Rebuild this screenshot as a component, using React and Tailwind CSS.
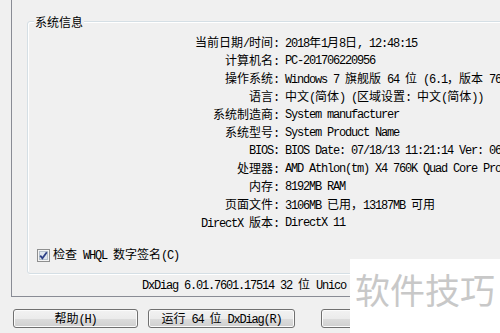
import React from 'react';

const CJK = /([\u2E80-\u9FFF\u3000-\u303F\uFF00-\uFFEF]+)/;

// SimSun-like mix: CJK 12px full width, latin 6px half width
function T({ s }) {
  return s.split(CJK).map((p, i) => {
    if (!p) return null;
    if (CJK.test(p)) {
      return (
        <span key={i} className="font-['Noto_Sans_CJK_SC',sans-serif]">
          {p}
        </span>
      );
    }
    return (
      <span key={i} className="font-['Liberation_Mono',monospace] tracking-[-1.2px] whitespace-pre">
        {p}
      </span>
    );
  });
}

const rows = [
  ['当前日期/时间', '2018年1月8日, 12:48:15'],
  ['计算机名', 'PC-201706220956'],
  ['操作系统', 'Windows 7 旗舰版 64 位 (6.1，版本 7601)'],
  ['语言', '中文(简体) (区域设置: 中文(简体))'],
  ['系统制造商', 'System manufacturer'],
  ['系统型号', 'System Product Name'],
  ['BIOS', 'BIOS Date: 07/18/13 11:21:14 Ver: 0601'],
  ['处理器', 'AMD Athlon(tm) X4 760K Quad Core Processor'],
  ['内存', '8192MB RAM'],
  ['页面文件', '3106MB 已用，13187MB 可用'],
  ['DirectX 版本', 'DirectX 11'],
];

function Button({ label, className }) {
  return (
    <div
      className={
        'h-[19px] flex items-center justify-center rounded-[3px] border border-[#707070] bg-[linear-gradient(#f2f2f2_0%,#ebebeb_50%,#dddddd_50%,#cfcfcf_100%)] shadow-[inset_0_0_0_1px_#fbfbfb] ' +
        className
      }
    >
      {label && (
        <span className="leading-[12px]">
          <T s={label} />
        </span>
      )}
    </div>
  );
}

function CheckBox() {
  return (
    <svg width="13" height="13" viewBox="0 0 13 13" className="shrink-0">
      <rect x="0.5" y="0.5" width="12" height="12" fill="#f4f4f4" stroke="#8e8f8f" />
      <rect x="2.5" y="2.5" width="8" height="8" fill="#dfe6ee" stroke="#b5c0cc" />
      <path d="M3.2 6.6 L5.4 9.2 L9.8 3.2" fill="none" stroke="#2c3f86" strokeWidth="1.8" />
    </svg>
  );
}

export default function App() {
  return (
    <div className="w-[500px] h-[333px] bg-[#f0f0f0] overflow-hidden relative flex text-[12px] text-black leading-[18px]">
      {/* window frame edge */}
      <div className="w-[2px] bg-[#a8d6ec]" />
      <div className="w-px bg-[#6aaed3]" />

      <div className="flex-1 flex flex-col pl-[11px]">
        {/* tab page */}
        <div className="h-[297px] border-l border-b border-[#898c95] pl-[15px] pt-[21px] flex flex-col">
          <div className="relative h-[253px] border border-[#d5dfe5] rounded-[3px] shadow-[inset_1px_1px_0_#ffffff,1px_1px_0_#ffffff] pt-[11px] flex flex-col">
            <span className="absolute -top-[9px] left-[6px] bg-[#f0f0f0] px-px leading-[18px]">
              <T s="系统信息" />
            </span>

            <div className="grid grid-cols-[251px_1fr] gap-x-[6px] whitespace-nowrap">
              {rows.map(([k, v]) => (
                <React.Fragment key={k}>
                  <div className="text-right h-[18px]">
                    <T s={k + ':'} />
                  </div>
                  <div className="h-[18px]">
                    <T s={v} />
                  </div>
                </React.Fragment>
              ))}
            </div>

            <div className="mt-[15px] pl-[9px] h-[18px] flex items-center gap-[3px]">
              <CheckBox />
              <span>
                <T s="检查 WHQL 数字签名(C)" />
              </span>
            </div>
          </div>

          <div className="pl-[115px] mt-px h-[18px] whitespace-nowrap">
            <T s="DxDiag 6.01.7601.17514 32 位 Unico" />
          </div>
        </div>

        {/* buttons */}
        <div className="mt-[12px] pl-[2px] flex whitespace-nowrap">
          <Button label="帮助(H)" className="w-[125px]" />
          <Button label="运行 64 位 DxDiag(R)" className="w-[147px] ml-[10px]" />
          <Button label="" className="w-[147px] ml-[26px]" />
        </div>
      </div>

      {/* watermark */}
      <div className="absolute right-0 bottom-0 w-[150px] h-[74px] bg-white flex justify-center pt-[12px]">
        <span className="font-['Noto_Sans_CJK_SC',sans-serif] text-[35px] leading-[35px] text-[#c8c8c8]">
          软件技巧
        </span>
      </div>
    </div>
  );
}
